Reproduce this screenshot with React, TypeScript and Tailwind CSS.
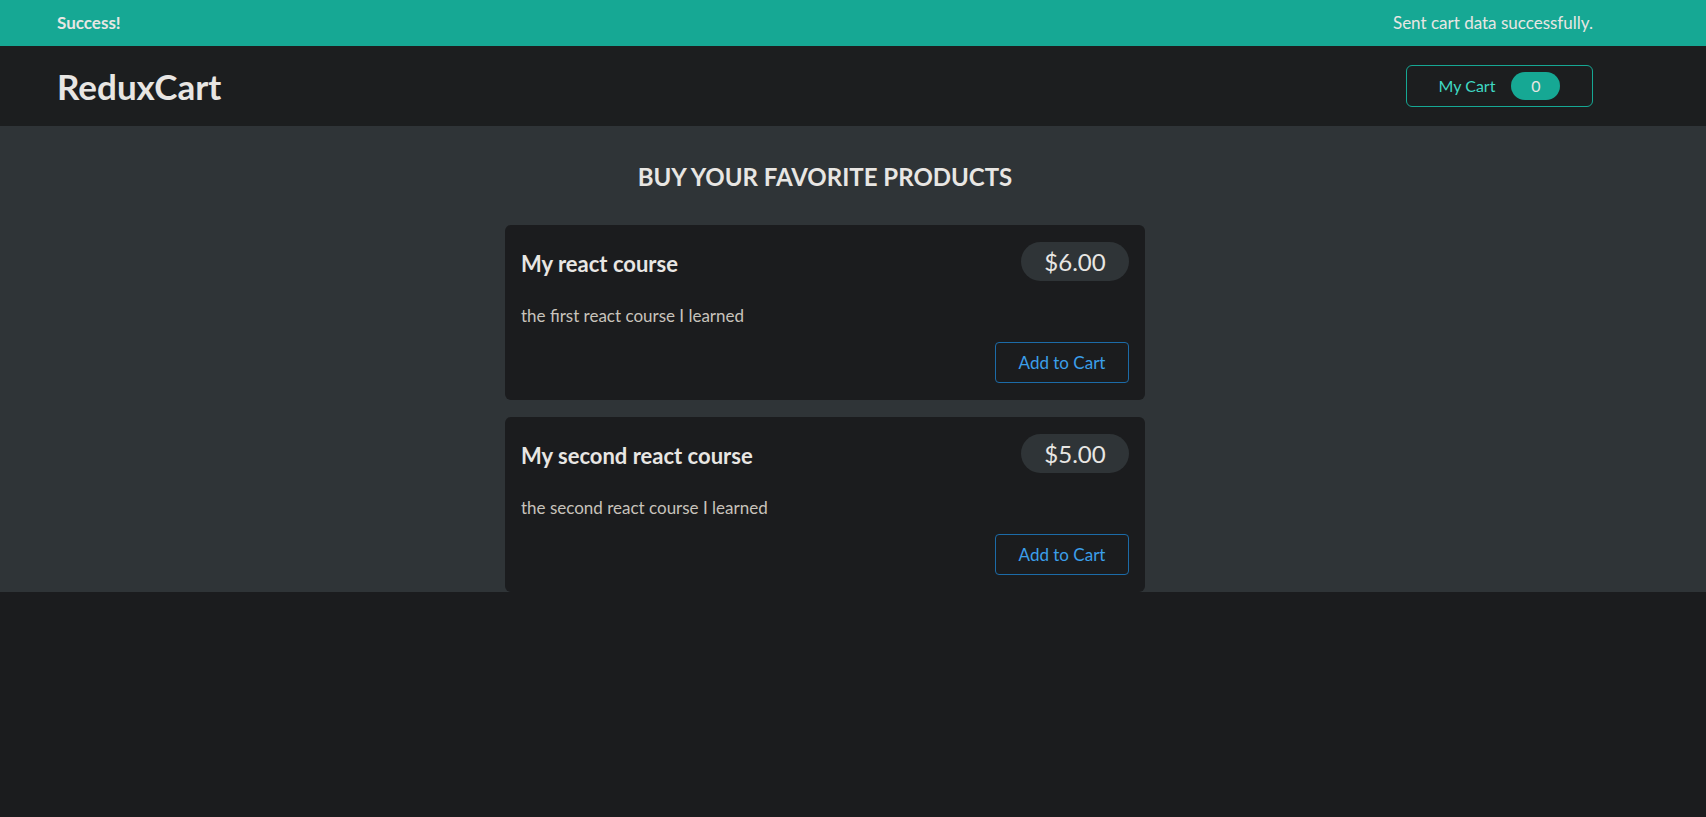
const products = [
  { id: 1, title: "My react course", price: 6, description: "the first react course I learned" },
  { id: 2, title: "My second react course", price: 5, description: "the second react course I learned" },
]

function Notification() {
  return (
    <div className="flex h-[46px] items-center justify-between bg-[#16a894] pl-[57px] pr-[113px] text-[17px] text-[#e8e6e3]">
      <h2 className="font-bold">Success!</h2>
      <p>Sent cart data successfully.</p>
    </div>
  )
}

function MainHeader() {
  return (
    <header className="flex h-[80px] items-center justify-between bg-[#1c1e1f] pl-[57px] pr-[113px]">
      <h1 className="text-[35px] font-bold text-[#e8e6e3]">ReduxCart</h1>
      <button className="flex h-[42px] w-[187px] items-center justify-center gap-[16px] rounded-[6px] border border-[#16a894] text-[16px] text-[#3fd9c3]">
        <span>My Cart</span>
        <span className="flex h-[28px] w-[49px] items-center justify-center rounded-full bg-[#16a894] text-[#e8e6e3]">0</span>
      </button>
    </header>
  )
}

function ProductItem({ title, price, description }: { title: string; price: number; description: string }) {
  return (
    <li className="rounded-[6px] bg-[#1b1c1e] px-[16px] pt-[17px] pb-[17px]">
      <header className="flex items-center justify-between">
        <h3 className="pt-[4px] text-[22px] font-bold text-[#e8e6e3]">{title}</h3>
        <div className="flex h-[39px] w-[108px] items-center justify-center rounded-full bg-[#2f3437] text-[24px] text-[#e8e6e3]">
          ${price.toFixed(2)}
        </div>
      </header>
      <p className="mt-[23px] text-[17px] leading-[24px] text-[#c8c3bc]">{description}</p>
      <div className="mt-[14px] flex justify-end">
        <button className="h-[41px] w-[134px] rounded-[4px] border border-[#1c6ba8] text-[17px] text-[#3b9fea]">
          Add to Cart
        </button>
      </div>
    </li>
  )
}

export default function App() {
  return (
    <div className="min-h-[817px] bg-[#1b1c1e] font-['Lato',sans-serif]">
      <Notification />
      <MainHeader />
      <main className="bg-[#2f3437] pl-[57px] pr-[113px] pt-[36px]">
        <section className="mx-auto w-[640px]">
          <h2 className="mb-[33px] text-center text-[24px] leading-[30px] font-bold text-[#e8e6e3]">BUY YOUR FAVORITE PRODUCTS</h2>
          <ul className="flex flex-col gap-[17px]">
            {products.map((p) => (
              <ProductItem key={p.id} {...p} />
            ))}
          </ul>
        </section>
      </main>
    </div>
  )
}
